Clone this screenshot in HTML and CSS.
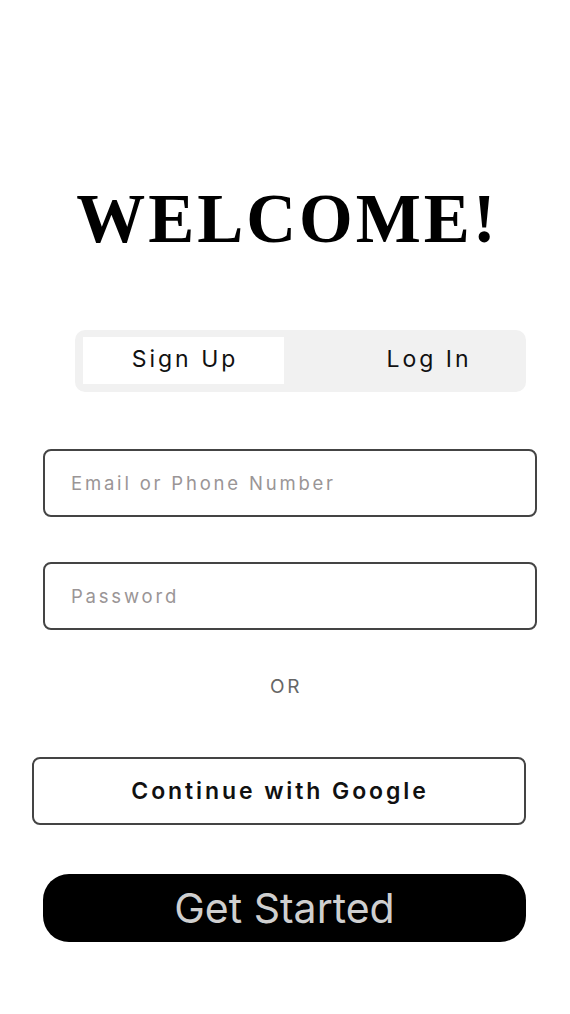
FILE: index.html
```html
<!DOCTYPE html>
<html>
<head>
<meta charset="utf-8">
<link rel="stylesheet" href="styles.css">
</head>
<body>
<main class="screen">
  <h1 class="title">WELCOME!</h1>
  <div class="tabs">
    <div class="tab tab-active">Sign Up</div>
    <div class="tab">Log In</div>
  </div>
  <div class="field field-email"><span class="placeholder">Email or Phone Number</span></div>
  <div class="field field-pass"><span class="placeholder">Password</span></div>
  <div class="or">OR</div>
  <div class="google">Continue with Google</div>
  <div class="start">Get Started</div>
</main>
</body>
</html>
```

FILE: styles.css
```css
html, body {
  margin: 0;
  padding: 0;
  background: #ffffff;
}
.screen {
  width: 570px;
  height: 1014px;
  display: flex;
  flex-direction: column;
  font-family: Inter, "Noto Sans", sans-serif;
}
.title {
  margin: 179px 0 0 0;
  height: 80px;
  line-height: 80px;
  text-align: center;
  font-family: "Liberation Serif", serif;
  font-weight: bold;
  font-size: 69px;
  letter-spacing: 3px;
  color: #000;
  padding-left: 5px;
}
.tabs {
  margin: 71px 0 0 75px;
  width: 451px;
  height: 62px;
  box-sizing: border-box;
  padding: 7px 8px 7px 8px;
  background: #f1f1f1;
  border-radius: 10px;
  display: flex;
}
.tab {
  width: 201px;
  height: 47px;
  display: flex;
  align-items: center;
  justify-content: center;
  font-size: 23px;
  letter-spacing: 3px;
  color: #111;
  padding-left: 3px;
  padding-bottom: 3px;
  box-sizing: border-box;
}
.tab + .tab {
  flex: 1;
  padding-left: 56px;
}
.tab-active {
  background: #ffffff;
}
.field {
  margin-left: 43px;
  width: 494px;
  height: 68px;
  box-sizing: border-box;
  border: 2px solid #444;
  border-radius: 8px;
  display: flex;
  align-items: center;
  padding-left: 26px;
}
.field-email {
  margin-top: 57px;
}
.field-pass {
  margin-top: 45px;
}
.placeholder {
  font-size: 18.5px;
  letter-spacing: 2.8px;
  color: #9a9596;
}
.or {
  margin-top: 45px;
  text-align: center;
  font-size: 19px;
  letter-spacing: 2.5px;
  color: #666;
  line-height: 24px;
  padding-left: 2px;
}
.google {
  margin: 58px 0 0 32px;
  width: 494px;
  height: 68px;
  box-sizing: border-box;
  border: 2px solid #444;
  border-radius: 8px;
  display: flex;
  align-items: center;
  justify-content: center;
  font-size: 23px;
  font-weight: 600;
  letter-spacing: 2.9px;
  color: #111;
  padding-left: 2px;
}
.start {
  margin: 49px 0 0 43px;
  width: 483px;
  height: 68px;
  background: #000;
  border-radius: 26px;
  display: flex;
  align-items: center;
  justify-content: center;
  font-size: 41px;
  color: #cfcfcf;
}
```
